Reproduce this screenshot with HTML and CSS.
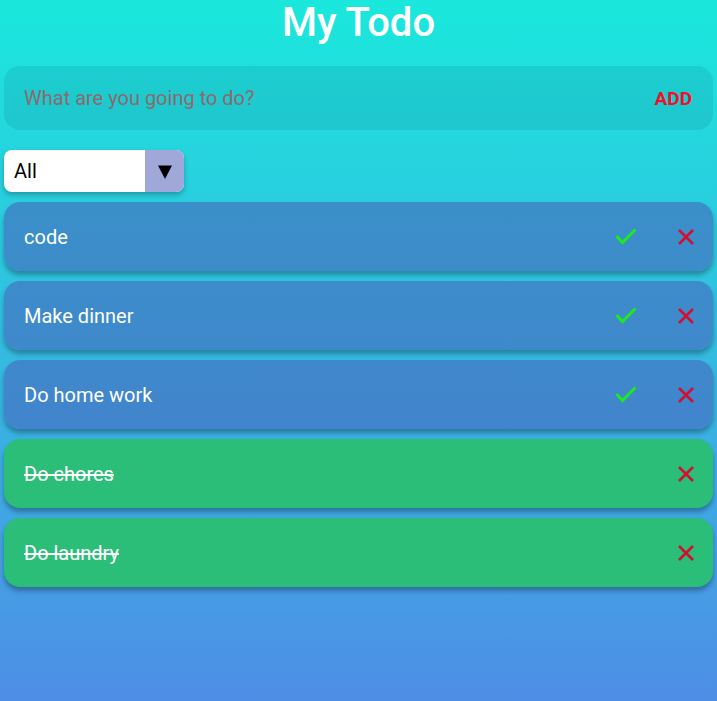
FILE: index.html
```html
<!DOCTYPE html>
<html>
<head>
<meta charset="utf-8">
<link rel="stylesheet" href="styles.css">
</head>
<body>
<div class="app">
  <h1 class="title">My Todo</h1>
  <form class="add-form">
    <input class="add-input" type="text" placeholder="What are you going to do?">
    <button class="add-btn" type="button">ADD</button>
  </form>
  <div class="filter">
    <span class="filter-value">All</span>
    <span class="filter-arrow"><svg class="tri" viewBox="0 0 14 14"><path d="M0 0.5h14L7 14z" fill="#000"/></svg></span>
  </div>
  <ul class="list">
    <li class="item">
      <span class="item-text">code</span>
      <span class="actions">
        <svg class="check" viewBox="0 0 22 17"><path d="M1.5 8l6 6.5L20.5 1.5" fill="none" stroke="#1ee81e" stroke-width="3"/></svg>
        <svg class="cross" viewBox="0 0 16 16"><path d="M1 1l14 14M15 1L1 15" fill="none" stroke="#d0102e" stroke-width="2.6"/></svg>
      </span>
    </li>
    <li class="item">
      <span class="item-text">Make dinner</span>
      <span class="actions">
        <svg class="check" viewBox="0 0 22 17"><path d="M1.5 8l6 6.5L20.5 1.5" fill="none" stroke="#1ee81e" stroke-width="3"/></svg>
        <svg class="cross" viewBox="0 0 16 16"><path d="M1 1l14 14M15 1L1 15" fill="none" stroke="#d0102e" stroke-width="2.6"/></svg>
      </span>
    </li>
    <li class="item">
      <span class="item-text">Do home work</span>
      <span class="actions">
        <svg class="check" viewBox="0 0 22 17"><path d="M1.5 8l6 6.5L20.5 1.5" fill="none" stroke="#1ee81e" stroke-width="3"/></svg>
        <svg class="cross" viewBox="0 0 16 16"><path d="M1 1l14 14M15 1L1 15" fill="none" stroke="#d0102e" stroke-width="2.6"/></svg>
      </span>
    </li>
    <li class="item done">
      <span class="item-text">Do chores</span>
      <span class="actions">
        <svg class="cross" viewBox="0 0 16 16"><path d="M1 1l14 14M15 1L1 15" fill="none" stroke="#d0102e" stroke-width="2.6"/></svg>
      </span>
    </li>
    <li class="item done">
      <span class="item-text">Do laundry</span>
      <span class="actions">
        <svg class="cross" viewBox="0 0 16 16"><path d="M1 1l14 14M15 1L1 15" fill="none" stroke="#d0102e" stroke-width="2.6"/></svg>
      </span>
    </li>
  </ul>
</div>
</body>
</html>
```

FILE: styles.css
```css
html, body {
  margin: 0;
  height: 100%;
}
body {
  background: linear-gradient(to bottom, #1ae8dc 0%, #4e8ee6 100%);
  font-family: Roboto, "Noto Sans", sans-serif;
  min-height: 701px;
}
.app {
  padding: 0 4px;
}
.title {
  margin: 0;
  padding-top: 2px;
  text-align: center;
  color: #fff;
  font-size: 40px;
  font-weight: 500;
  line-height: 42px;
}
.add-form {
  margin-top: 22px;
  height: 64px;
  border-radius: 16px;
  background: rgba(0, 60, 80, 0.1);
  display: flex;
  align-items: center;
  padding: 0 20px;
}
.add-input {
  flex: 1;
  border: none;
  outline: none;
  background: transparent;
  font-family: Roboto, sans-serif;
  font-size: 20px;
  color: #333;
  padding: 0;
}
.add-input::placeholder {
  color: #8c6a6e;
}
.add-btn {
  border: none;
  background: transparent;
  color: #f0102c;
  font-family: Roboto, sans-serif;
  font-size: 19px;
  font-weight: 700;
  padding: 0;
  margin-right: 1px;
}
.filter {
  margin-top: 20px;
  width: 180px;
  height: 42px;
  border-radius: 8px;
  background: #fff;
  display: flex;
  overflow: hidden;
  box-shadow: 0 3px 5px rgba(0, 0, 0, 0.25);
}
.filter-value {
  flex: 1;
  display: flex;
  align-items: center;
  padding-left: 10px;
  font-size: 20px;
  color: #000;
}
.filter-arrow {
  width: 39px;
  background: #a0a8da;
  display: flex;
  align-items: center;
  justify-content: center;
}
.tri {
  width: 14px;
  height: 14px;
  display: block;
  margin-top: 1px;
}
.list {
  list-style: none;
  margin: 10px 0 0;
  padding: 0;
  display: flex;
  flex-direction: column;
  gap: 10px;
}
.item {
  height: 69px;
  border-radius: 16px;
  background: linear-gradient(to bottom, #3499c5, #4a78d2) fixed;
  display: flex;
  align-items: center;
  padding: 0 19px 0 20px;
  box-shadow: 0 4px 5px rgba(0, 0, 0, 0.3);
}
.item.done {
  background: #2bbe78;
}
.item-text {
  flex: 1;
  color: #fff;
  font-size: 20px;
}
.done .item-text {
  text-decoration: line-through;
}
.actions {
  display: flex;
  align-items: center;
  gap: 41px;
}
.check {
  width: 22px;
  height: 17px;
  display: block;
}
.cross {
  width: 16px;
  height: 16px;
  display: block;
}
```
